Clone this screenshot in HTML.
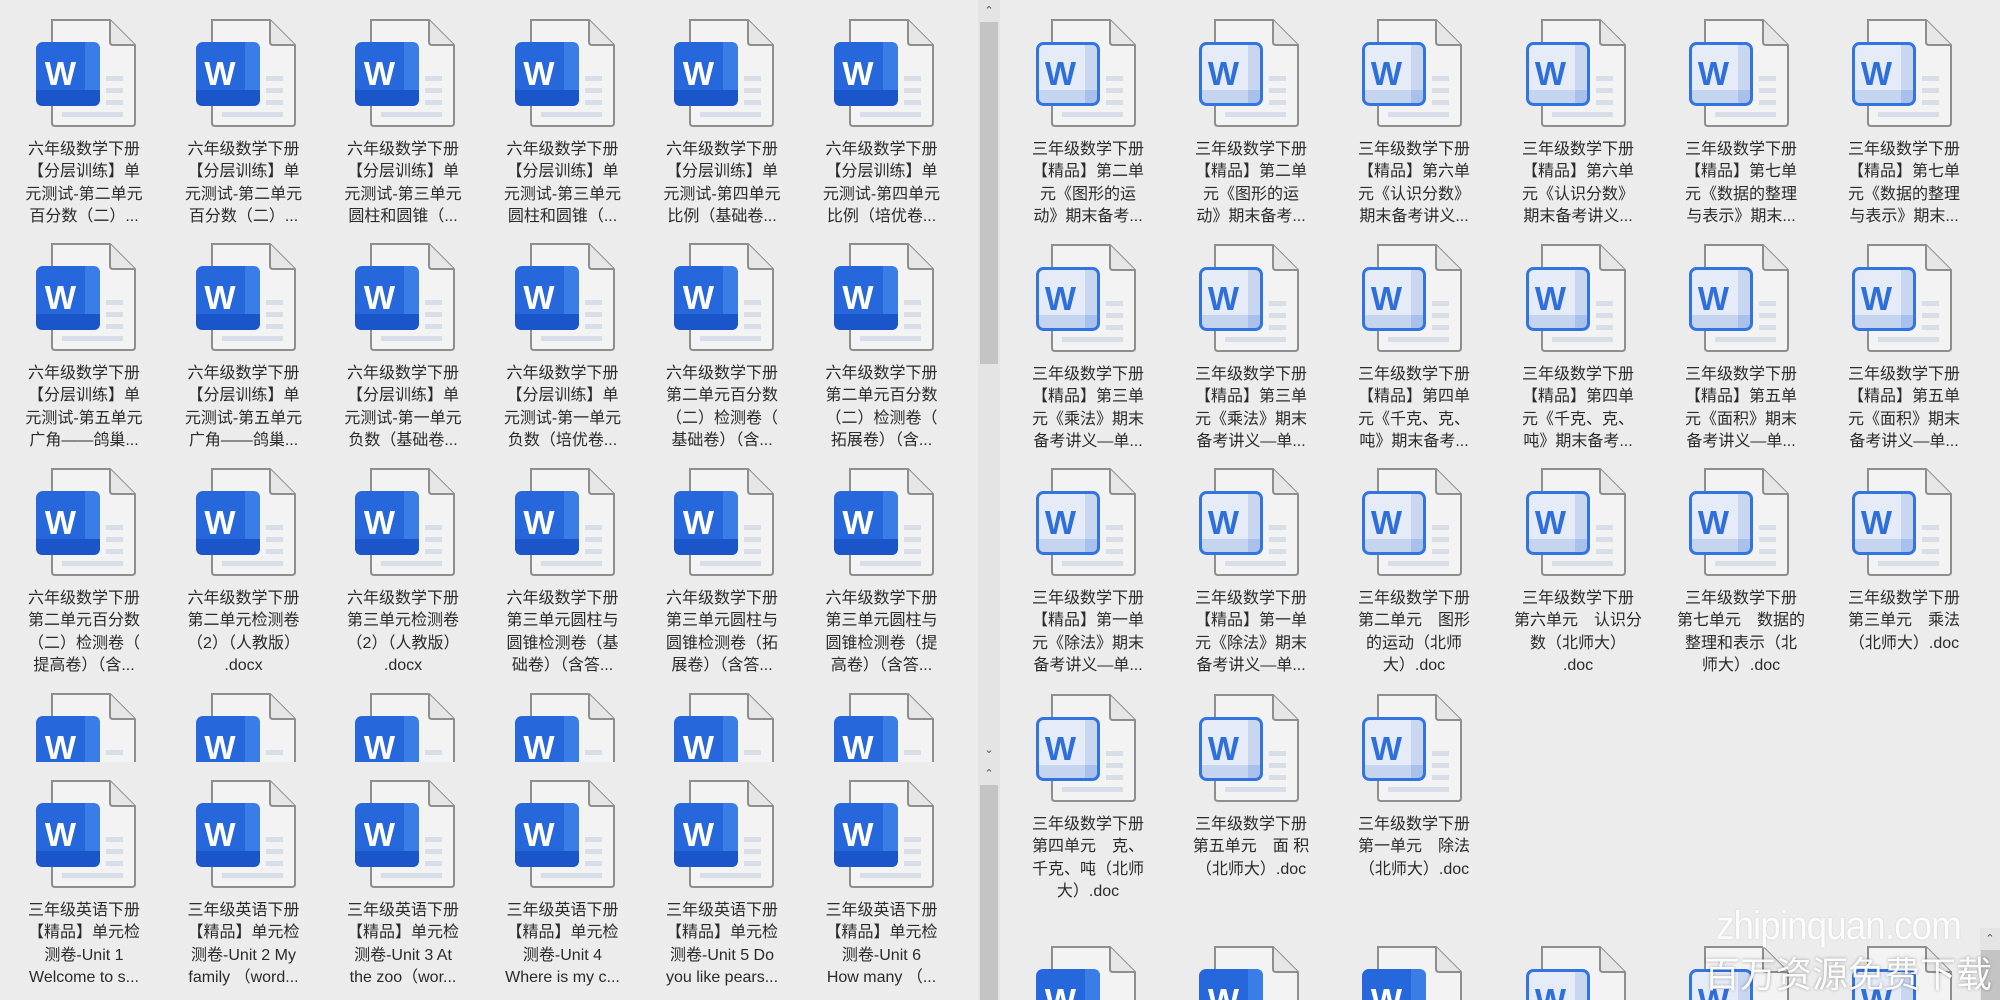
<!DOCTYPE html>
<html><head><meta charset="utf-8">
<style>
*{margin:0;padding:0;box-sizing:border-box}
html,body{width:2000px;height:1000px;overflow:hidden;background:#ececec;font-family:"Liberation Sans","Noto Sans CJK SC",sans-serif}
#root{position:relative;width:2000px;height:1000px;overflow:hidden}
.c{position:absolute;width:140px;height:230px}
.c svg{position:absolute;left:22px;top:0;width:100px;height:110px}
.w{position:absolute;left:22px;top:23px;width:49px;height:64px;text-align:center;font:bold 33px/64px "Liberation Sans",sans-serif;color:#fff}
.o .w{color:#2f6fdc}
.c p{position:absolute;left:-6px;top:120px;width:152px;text-align:center;font-size:16px;line-height:22.4px;color:#2a2a2a;white-space:nowrap}
.r p{left:-2px}
.s{height:54px;overflow:hidden}
.s2{height:69px;overflow:hidden}
#clip{position:absolute;left:0;top:0;width:978px;height:762px;overflow:hidden}
.sb{position:absolute;background:#e4e4e4}
.th{position:absolute;background:#c4c4c4}
.ar{position:absolute;font:11px/12px "DejaVu Sans",sans-serif;color:#555;text-align:center;width:20px}
.wm1{position:absolute;left:1716px;top:902px;font:40px/48px "Liberation Sans",sans-serif;color:rgba(255,255,255,.92);letter-spacing:-1px;text-shadow:0 0 2px rgba(0,0,0,.15);transform:scaleX(.92);transform-origin:left}
.wm2{position:absolute;left:1704px;top:950px;font:36px/44px "Noto Sans CJK SC",sans-serif;color:rgba(255,255,255,.95);text-shadow:0 0 3px rgba(0,0,0,.35)}
</style></head><body>
<div id="root">
<svg width="0" height="0" style="position:absolute">
<defs>
<symbol id="dA" viewBox="0 0 100 110">
<path d="M16 1 H74 L99 26 V104 Q99 107 96 107 H19 Q16 107 16 104 Z" fill="#f3f3f3" stroke="#8e8e8e" stroke-width="2"/>
<path d="M74 1 V23 Q74 26 77 26 H99" fill="#e6e6e6" stroke="#8e8e8e" stroke-width="2"/>
<rect x="70" y="57" width="17" height="5" fill="#d8dee8"/><rect x="70" y="69" width="17" height="5" fill="#d8dee8"/><rect x="70" y="81" width="17" height="5" fill="#d8dee8"/><rect x="26" y="93" width="61" height="5" fill="#d8dee8"/>
<rect x="0" y="23" width="64" height="64" rx="7" fill="#2767dc"/>
<path d="M49 23 H57 Q64 23 64 30 V80 Q64 87 57 87 H49 Z" fill="#3b7de6"/>
<path d="M0 71 H64 V80 Q64 87 57 87 H7 Q0 87 0 80 Z" fill="#1a55c9"/>
</symbol>
<symbol id="dB" viewBox="0 0 100 110">
<path d="M16 1 H74 L99 26 V104 Q99 107 96 107 H19 Q16 107 16 104 Z" fill="#f3f3f3" stroke="#8e8e8e" stroke-width="2"/>
<path d="M74 1 V23 Q74 26 77 26 H99" fill="#e6e6e6" stroke="#8e8e8e" stroke-width="2"/>
<rect x="70" y="57" width="17" height="5" fill="#d8dee8"/><rect x="70" y="69" width="17" height="5" fill="#d8dee8"/><rect x="70" y="81" width="17" height="5" fill="#d8dee8"/><rect x="26" y="93" width="61" height="5" fill="#d8dee8"/>
<rect x="1.5" y="24.5" width="61" height="61" rx="6" fill="#e6ecf7"/>
<rect x="49" y="26" width="12" height="58" fill="#c8d6ef"/>
<rect x="3" y="71" width="58" height="13" fill="#c6d5ef"/>
<rect x="49" y="71" width="12" height="13" fill="#a8c0ea"/>
<rect x="1.5" y="24.5" width="61" height="61" rx="6" fill="none" stroke="#3274e0" stroke-width="3"/>
</symbol>
</defs></svg>

<div id="clip">
<div class="c" style="left:14px;top:19px"><svg><use href="#dA"/></svg><div class="w">W</div><p>六年级数学下册<br>【分层训练】单<br>元测试-第二单元<br>百分数（二）...</p></div>
<div class="c" style="left:173.5px;top:19px"><svg><use href="#dA"/></svg><div class="w">W</div><p>六年级数学下册<br>【分层训练】单<br>元测试-第二单元<br>百分数（二）...</p></div>
<div class="c" style="left:333px;top:19px"><svg><use href="#dA"/></svg><div class="w">W</div><p>六年级数学下册<br>【分层训练】单<br>元测试-第三单元<br>圆柱和圆锥（...</p></div>
<div class="c" style="left:492.5px;top:19px"><svg><use href="#dA"/></svg><div class="w">W</div><p>六年级数学下册<br>【分层训练】单<br>元测试-第三单元<br>圆柱和圆锥（...</p></div>
<div class="c" style="left:652px;top:19px"><svg><use href="#dA"/></svg><div class="w">W</div><p>六年级数学下册<br>【分层训练】单<br>元测试-第四单元<br>比例（基础卷...</p></div>
<div class="c" style="left:811.5px;top:19px"><svg><use href="#dA"/></svg><div class="w">W</div><p>六年级数学下册<br>【分层训练】单<br>元测试-第四单元<br>比例（培优卷...</p></div>
<div class="c" style="left:14px;top:243px"><svg><use href="#dA"/></svg><div class="w">W</div><p>六年级数学下册<br>【分层训练】单<br>元测试-第五单元<br>广角——鸽巢...</p></div>
<div class="c" style="left:173.5px;top:243px"><svg><use href="#dA"/></svg><div class="w">W</div><p>六年级数学下册<br>【分层训练】单<br>元测试-第五单元<br>广角——鸽巢...</p></div>
<div class="c" style="left:333px;top:243px"><svg><use href="#dA"/></svg><div class="w">W</div><p>六年级数学下册<br>【分层训练】单<br>元测试-第一单元<br>负数（基础卷...</p></div>
<div class="c" style="left:492.5px;top:243px"><svg><use href="#dA"/></svg><div class="w">W</div><p>六年级数学下册<br>【分层训练】单<br>元测试-第一单元<br>负数（培优卷...</p></div>
<div class="c" style="left:652px;top:243px"><svg><use href="#dA"/></svg><div class="w">W</div><p>六年级数学下册<br>第二单元百分数<br>（二）检测卷（<br>基础卷）（含...</p></div>
<div class="c" style="left:811.5px;top:243px"><svg><use href="#dA"/></svg><div class="w">W</div><p>六年级数学下册<br>第二单元百分数<br>（二）检测卷（<br>拓展卷）（含...</p></div>
<div class="c" style="left:14px;top:468px"><svg><use href="#dA"/></svg><div class="w">W</div><p>六年级数学下册<br>第二单元百分数<br>（二）检测卷（<br>提高卷）（含...</p></div>
<div class="c" style="left:173.5px;top:468px"><svg><use href="#dA"/></svg><div class="w">W</div><p>六年级数学下册<br>第二单元检测卷<br>（2）（人教版）<br>.docx</p></div>
<div class="c" style="left:333px;top:468px"><svg><use href="#dA"/></svg><div class="w">W</div><p>六年级数学下册<br>第三单元检测卷<br>（2）（人教版）<br>.docx</p></div>
<div class="c" style="left:492.5px;top:468px"><svg><use href="#dA"/></svg><div class="w">W</div><p>六年级数学下册<br>第三单元圆柱与<br>圆锥检测卷（基<br>础卷）（含答...</p></div>
<div class="c" style="left:652px;top:468px"><svg><use href="#dA"/></svg><div class="w">W</div><p>六年级数学下册<br>第三单元圆柱与<br>圆锥检测卷（拓<br>展卷）（含答...</p></div>
<div class="c" style="left:811.5px;top:468px"><svg><use href="#dA"/></svg><div class="w">W</div><p>六年级数学下册<br>第三单元圆柱与<br>圆锥检测卷（提<br>高卷）（含答...</p></div>
<div class="c s2" style="left:14px;top:693px"><svg><use href="#dA"/></svg><div class="w">W</div></div>
<div class="c s2" style="left:173.5px;top:693px"><svg><use href="#dA"/></svg><div class="w">W</div></div>
<div class="c s2" style="left:333px;top:693px"><svg><use href="#dA"/></svg><div class="w">W</div></div>
<div class="c s2" style="left:492.5px;top:693px"><svg><use href="#dA"/></svg><div class="w">W</div></div>
<div class="c s2" style="left:652px;top:693px"><svg><use href="#dA"/></svg><div class="w">W</div></div>
<div class="c s2" style="left:811.5px;top:693px"><svg><use href="#dA"/></svg><div class="w">W</div></div>
</div>
<div class="c" style="left:14px;top:780px"><svg><use href="#dA"/></svg><div class="w">W</div><p>三年级英语下册<br>【精品】单元检<br>测卷-Unit 1<br>Welcome to s...</p></div>
<div class="c" style="left:173.5px;top:780px"><svg><use href="#dA"/></svg><div class="w">W</div><p>三年级英语下册<br>【精品】单元检<br>测卷-Unit 2 My<br>family （word...</p></div>
<div class="c" style="left:333px;top:780px"><svg><use href="#dA"/></svg><div class="w">W</div><p>三年级英语下册<br>【精品】单元检<br>测卷-Unit 3 At<br>the zoo（wor...</p></div>
<div class="c" style="left:492.5px;top:780px"><svg><use href="#dA"/></svg><div class="w">W</div><p>三年级英语下册<br>【精品】单元检<br>测卷-Unit 4<br>Where is my c...</p></div>
<div class="c" style="left:652px;top:780px"><svg><use href="#dA"/></svg><div class="w">W</div><p>三年级英语下册<br>【精品】单元检<br>测卷-Unit 5 Do<br>you like pears...</p></div>
<div class="c" style="left:811.5px;top:780px"><svg><use href="#dA"/></svg><div class="w">W</div><p>三年级英语下册<br>【精品】单元检<br>测卷-Unit 6<br>How many （...</p></div>

<div class="sb" style="left:978px;top:0;width:22px;height:1000px"></div>
<div class="th" style="left:980px;top:22px;width:18px;height:342px"></div>
<div class="ar" style="left:979px;top:5px">&#8963;</div>
<div class="ar" style="left:979px;top:744px">&#8964;</div>
<div class="ar" style="left:979px;top:768px">&#8963;</div>
<div class="th" style="left:980px;top:785px;width:18px;height:215px"></div>

<div class="c o r" style="left:1014px;top:19px"><svg><use href="#dB"/></svg><div class="w">W</div><p>三年级数学下册<br>【精品】第二单<br>元《图形的运<br>动》期末备考...</p></div>
<div class="c o r" style="left:1177px;top:19px"><svg><use href="#dB"/></svg><div class="w">W</div><p>三年级数学下册<br>【精品】第二单<br>元《图形的运<br>动》期末备考...</p></div>
<div class="c o r" style="left:1340px;top:19px"><svg><use href="#dB"/></svg><div class="w">W</div><p>三年级数学下册<br>【精品】第六单<br>元《认识分数》<br>期末备考讲义...</p></div>
<div class="c o r" style="left:1504px;top:19px"><svg><use href="#dB"/></svg><div class="w">W</div><p>三年级数学下册<br>【精品】第六单<br>元《认识分数》<br>期末备考讲义...</p></div>
<div class="c o r" style="left:1667px;top:19px"><svg><use href="#dB"/></svg><div class="w">W</div><p>三年级数学下册<br>【精品】第七单<br>元《数据的整理<br>与表示》期末...</p></div>
<div class="c o r" style="left:1830px;top:19px"><svg><use href="#dB"/></svg><div class="w">W</div><p>三年级数学下册<br>【精品】第七单<br>元《数据的整理<br>与表示》期末...</p></div>
<div class="c o r" style="left:1014px;top:244px"><svg><use href="#dB"/></svg><div class="w">W</div><p>三年级数学下册<br>【精品】第三单<br>元《乘法》期末<br>备考讲义—单...</p></div>
<div class="c o r" style="left:1177px;top:244px"><svg><use href="#dB"/></svg><div class="w">W</div><p>三年级数学下册<br>【精品】第三单<br>元《乘法》期末<br>备考讲义—单...</p></div>
<div class="c o r" style="left:1340px;top:244px"><svg><use href="#dB"/></svg><div class="w">W</div><p>三年级数学下册<br>【精品】第四单<br>元《千克、克、<br>吨》期末备考...</p></div>
<div class="c o r" style="left:1504px;top:244px"><svg><use href="#dB"/></svg><div class="w">W</div><p>三年级数学下册<br>【精品】第四单<br>元《千克、克、<br>吨》期末备考...</p></div>
<div class="c o r" style="left:1667px;top:244px"><svg><use href="#dB"/></svg><div class="w">W</div><p>三年级数学下册<br>【精品】第五单<br>元《面积》期末<br>备考讲义—单...</p></div>
<div class="c o r" style="left:1830px;top:244px"><svg><use href="#dB"/></svg><div class="w">W</div><p>三年级数学下册<br>【精品】第五单<br>元《面积》期末<br>备考讲义—单...</p></div>
<div class="c o r" style="left:1014px;top:468px"><svg><use href="#dB"/></svg><div class="w">W</div><p>三年级数学下册<br>【精品】第一单<br>元《除法》期末<br>备考讲义—单...</p></div>
<div class="c o r" style="left:1177px;top:468px"><svg><use href="#dB"/></svg><div class="w">W</div><p>三年级数学下册<br>【精品】第一单<br>元《除法》期末<br>备考讲义—单...</p></div>
<div class="c o r" style="left:1340px;top:468px"><svg><use href="#dB"/></svg><div class="w">W</div><p>三年级数学下册<br>第二单元　图形<br>的运动（北师<br>大）.doc</p></div>
<div class="c o r" style="left:1504px;top:468px"><svg><use href="#dB"/></svg><div class="w">W</div><p>三年级数学下册<br>第六单元　认识分<br>数（北师大）<br>.doc</p></div>
<div class="c o r" style="left:1667px;top:468px"><svg><use href="#dB"/></svg><div class="w">W</div><p>三年级数学下册<br>第七单元　数据的<br>整理和表示（北<br>师大）.doc</p></div>
<div class="c o r" style="left:1830px;top:468px"><svg><use href="#dB"/></svg><div class="w">W</div><p>三年级数学下册<br>第三单元　乘法<br>（北师大）.doc</p></div>
<div class="c o r" style="left:1014px;top:694px"><svg><use href="#dB"/></svg><div class="w">W</div><p>三年级数学下册<br>第四单元　克、<br>千克、吨（北师<br>大）.doc</p></div>
<div class="c o r" style="left:1177px;top:694px"><svg><use href="#dB"/></svg><div class="w">W</div><p>三年级数学下册<br>第五单元　面 积<br>（北师大）.doc</p></div>
<div class="c o r" style="left:1340px;top:694px"><svg><use href="#dB"/></svg><div class="w">W</div><p>三年级数学下册<br>第一单元　除法<br>（北师大）.doc</p></div>
<div class="c s" style="left:1014px;top:946px"><svg><use href="#dA"/></svg><div class="w">W</div></div>
<div class="c s" style="left:1177px;top:946px"><svg><use href="#dA"/></svg><div class="w">W</div></div>
<div class="c s" style="left:1340px;top:946px"><svg><use href="#dA"/></svg><div class="w">W</div></div>
<div class="c o s" style="left:1504px;top:946px"><svg><use href="#dB"/></svg><div class="w">W</div></div>
<div class="c o s" style="left:1667px;top:946px"><svg><use href="#dB"/></svg><div class="w">W</div></div>
<div class="c o s" style="left:1830px;top:946px"><svg><use href="#dB"/></svg><div class="w">W</div></div>

<div class="sb" style="left:1980px;top:928px;width:20px;height:72px"></div>
<div class="ar" style="left:1980px;top:933px">&#8963;</div>
<div class="th" style="left:1981px;top:950px;width:19px;height:50px"></div>

<div class="wm1">zhipinquan.com</div>
<div class="wm2">百万资源免费下载</div>
</div>
</body></html>
